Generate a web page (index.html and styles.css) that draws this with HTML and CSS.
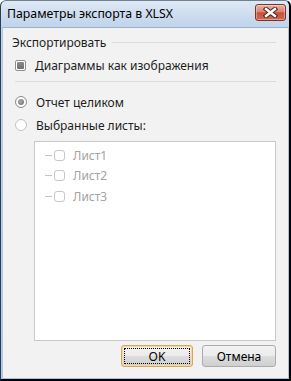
FILE: index.html
```html
<!DOCTYPE html>
<html>
<head>
<meta charset="utf-8">
<link rel="stylesheet" href="styles.css">
</head>
<body>
<div class="window">
  <div class="titlebar">
    <span class="title">Параметры экспорта в XLSX</span>
    <div class="close">
      <svg width="15" height="11" viewBox="0 0 15 11"><path d="M3 2 L12 9 M12 2 L3 9" stroke="#4a2420" stroke-width="4.4" stroke-linecap="square"/><path d="M3 2 L12 9 M12 2 L3 9" stroke="#fff" stroke-width="2.4" stroke-linecap="square"/></svg>
    </div>
  </div>
  <div class="client">
    <div class="group-head">
      <span>Экспортировать</span>
      <span class="head-line"></span>
    </div>
    <label class="row check-row">
      <span class="checkbox mixed"></span>
      <span>Диаграммы как изображения</span>
    </label>
    <div class="sep"></div>
    <label class="row radio-row first">
      <span class="radio on"></span>
      <span>Отчет целиком</span>
    </label>
    <label class="row radio-row">
      <span class="radio"></span>
      <span>Выбранные листы:</span>
    </label>
    <div class="listbox">
      <div class="item"><span class="dash"></span><span class="checkbox dis"></span><span class="itext">Лист1</span></div>
      <div class="item"><span class="dash"></span><span class="checkbox dis"></span><span class="itext">Лист2</span></div>
      <div class="item"><span class="dash"></span><span class="checkbox dis"></span><span class="itext">Лист3</span></div>
    </div>
    <div class="buttons">
      <div class="btn default"><span class="focus">OK</span></div>
      <div class="btn">Отмена</div>
    </div>
  </div>
</div>
</body>
</html>
```
FILE: styles.css
```css
* { box-sizing: border-box; }
html, body { margin: 0; padding: 0; background: #fff; }
body { width: 291px; height: 381px; overflow: hidden; font-family: "Noto Sans", "Open Sans", sans-serif; font-size: 12px; color: #1e1e1e; }
.window {
  width: 291px; height: 381px;
  background: linear-gradient(#dfe9f5 0px, #cddcee 14px, #bed3eb 27px, #a9c6e6 100%);
  border-left: 1px solid #2d3e52;
  border-top: 1px solid #6f7f90;
  border-right: 2px solid #000;
  border-bottom: 2px solid #000;
  border-radius: 6px 6px 0 0;
  display: flex; flex-direction: column;
}
.titlebar { height: 26px; display: flex; align-items: flex-start; padding: 4px 3px 0 6px; justify-content: space-between; }
.title { font-size: 12.3px; color: #000; line-height: 16px; margin-top: 1px; }
.close {
  width: 31px; height: 17px; margin-top: -1px;
  border: 1px solid #7a3328; border-radius: 3px;
  background: linear-gradient(#eab0a2 0%, #dc8470 45%, #c8503a 52%, #d2694f 100%);
  display: flex; align-items: center; justify-content: center;
  box-shadow: inset 0 0 0 1px rgba(255,255,255,0.35);
}
.client {
  flex: 1; margin: 0 0 0 1px; background: #f2f2f2;
  border-top: 1px solid #9fb4cc;
  border-left: 1px solid #b5cbe3;
  border-right: 1px solid #a5c4e5;
  border-bottom: 1px solid #a5c4e5;
  padding: 6px 9px 0 9px;
  display: flex; flex-direction: column;
}
.group-head { display: flex; align-items: center; height: 17px; gap: 6px; }
.head-line { flex: 1; height: 1px; background: #dcdcdc; margin-right: 3px; }
.row { display: flex; align-items: center; gap: 9px; padding-left: 3px; height: 16px; }
.check-row { margin-top: 6px; }
.sep { height: 1px; background: #dcdcdc; margin: 8px 3px 0 3px; }
.radio-row.first { margin-top: 12px; }
.radio-row { margin-top: 7px; }
.checkbox {
  width: 11px; height: 11px; border: 1px solid #8f8f8f; border-radius: 2px; background: #fff; position: relative; flex: none;
}
.checkbox.mixed::after { content: ""; position: absolute; left: 1px; top: 1px; width: 7px; height: 7px; background: linear-gradient(#8d8d8d, #6f6f6f); border-radius: 1px; }
.checkbox.dis { border-color: #c7c7c7; background: #fff; border-radius: 3px; }
.radio { width: 12px; height: 12px; border-radius: 50%; border: 1px solid #c4c4c4; background: radial-gradient(circle, #fff 55%, #ededed 100%); position: relative; flex: none; }
.radio.on { border-color: #8d8d8d; }
.radio.on::after { content: ""; position: absolute; left: 2px; top: 2px; width: 6px; height: 6px; border-radius: 50%; background: radial-gradient(circle at 40% 40%, #aaa, #6a6a6a); }
.listbox {
  margin: 8px 3px 0 22px; height: 200px; background: #fff; border: 1px solid #c9c9c9; padding: 3px 0 0 10px;
}
.item { display: flex; align-items: center; height: 20.5px; color: #a3a3a3; }
.dash { width: 7px; height: 1px; background: #c4c4c4; margin-right: 2px; }
.itext { margin-left: 8px; }
.buttons { display: flex; justify-content: flex-end; gap: 9px; margin: 4px 3px 0 0; }
.btn {
  width: 74px; height: 22px; border: 1px solid #acacac; border-radius: 3px;
  background: linear-gradient(#f2f2f2 0%, #ebebeb 50%, #dddddd 51%, #cfcfcf 100%);
  display: flex; align-items: center; justify-content: center; color: #000;
}
.btn.default { width: 72px; border-color: #d9a84a; box-shadow: inset 0 0 0 1px #f6d9a0; padding: 2px; }
.focus { flex: 1; align-self: stretch; border: 1px dotted #000; display: flex; align-items: center; justify-content: center; }
```
